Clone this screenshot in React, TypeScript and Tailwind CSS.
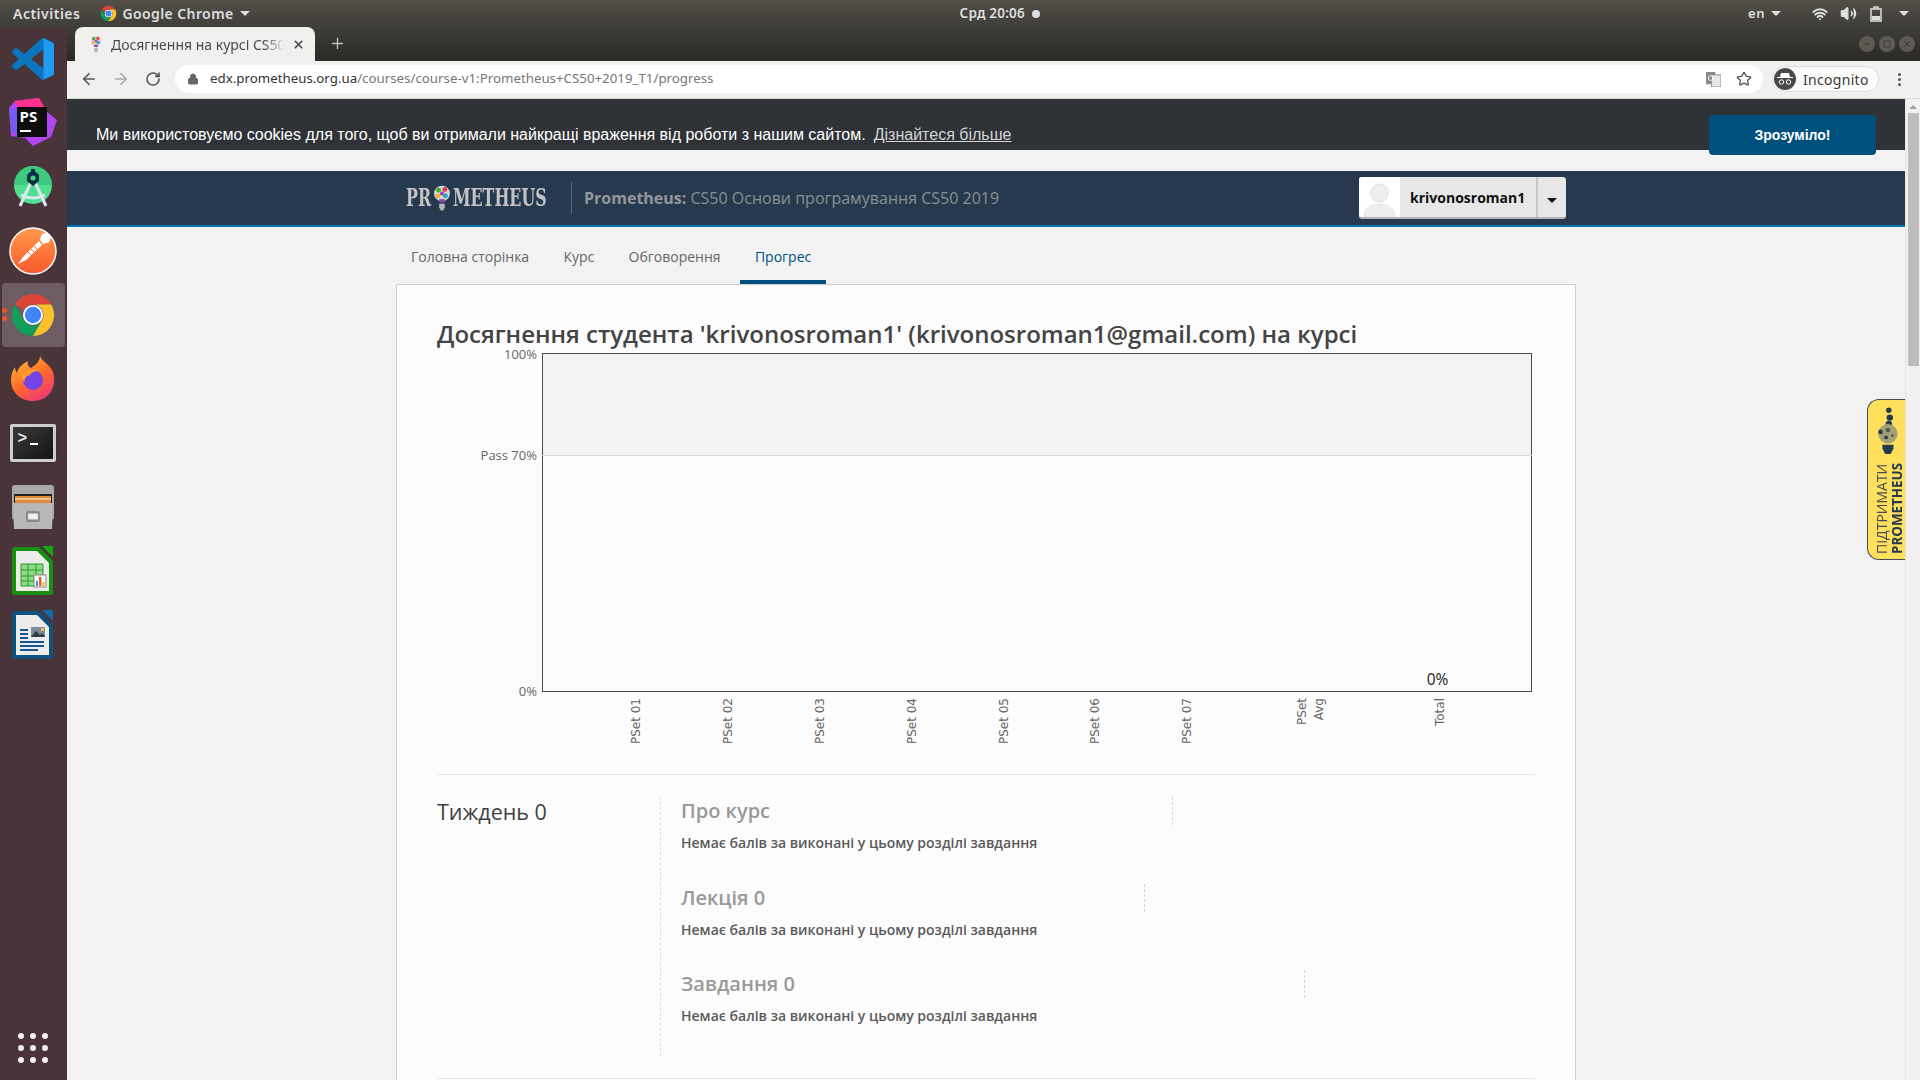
import { ArrowLeft, ArrowRight, Lock, Minus, Plus, RotateCw, Square, Star, Volume2, Wifi, X } from "lucide-react";

const pageSections = [
  { title: "Про курс", width: "w-[492px]" },
  { title: "Лекція 0", width: "w-[464px]" },
  { title: "Завдання 0", width: "w-[624px]" },
];

const navItems = ["Головна сторінка", "Курс", "Обговорення", "Прогрес"];

const xTicks = [
  { x: 199, label: "PSet 01" },
  { x: 291, label: "PSet 02" },
  { x: 383, label: "PSet 03" },
  { x: 475, label: "PSet 04" },
  { x: 567, label: "PSet 05" },
  { x: 658, label: "PSet 06" },
  { x: 750, label: "PSet 07" },
];

function Caret({ className }: { className: string }) {
  return <span className={`inline-block h-0 w-0 border-x-[5px] border-t-[5px] border-x-transparent ${className}`} />;
}

function ChromeIcon({ size }: { size: number }) {
  return (
    <svg width={size} height={size} viewBox="0 0 48 48">
      <path fill="#db4437" d="M5 13A22 22 0 0 1 43 13H24a11 11 0 0 0-9.5 5.5z" />
      <path fill="#0f9d58" d="M5 13A22 22 0 0 0 24 46l9.5-16.5a11 11 0 0 1-19 0z" />
      <path fill="#fbc02d" d="M43 13H24a11 11 0 0 1 9.5 16.5L24 46A22 22 0 0 0 43 13z" />
      <circle cx="24" cy="24" r="10.5" fill="#fff" />
      <circle cx="24" cy="24" r="8.5" fill="#4285f4" />
    </svg>
  );
}

function Bulb({ className }: { className: string }) {
  return (
    <svg className={className} viewBox="0 0 16 24">
      <circle cx="8" cy="8" r="7" fill="#d8d8d8" />
      <circle cx="5" cy="5" r="2.2" fill="#43b02a" />
      <circle cx="10.5" cy="4.5" r="2.2" fill="#e23c4b" />
      <circle cx="4.5" cy="10" r="2" fill="#f0b429" />
      <circle cx="11" cy="10" r="2.2" fill="#2aa6c9" />
      <circle cx="8" cy="8" r="1.8" fill="#a33fb0" />
      <path fill="#8d4aa8" d="M5.5 13h5v3h-5z" />
      <path fill="#b5b5b5" d="M5.5 17h5v3.5L9 23H7l-1.500-2.500z" />
    </svg>
  );
}

function DockIcons() {
  return [
    <svg key="code" width="42" height="42" viewBox="0 0 100 100">
      <path fill="#0b75bd" fillRule="evenodd" d="M70.9 99.3c1.6.6 3.4.6 5-.2l20.6-9.9c2.100-1 3.500-3.200 3.500-5.600V16.400c0-2.400-1.400-4.600-3.500-5.600L75.900.9c-2.100-1-4.600-.8-6.400.6-.3.2-.5.400-.7.600L29.400 38 12.200 25c-1.600-1.200-3.800-1.100-5.300.2l-5.500 5c-1.800 1.700-1.800 4.500 0 6.200L16.200 50 1.400 63.600c-1.800 1.700-1.800 4.500 0 6.200l5.500 5c1.500 1.300 3.700 1.400 5.300.2l17.200-13 39.400 35.900c.6.600 1.300 1.100 2.100 1.400zM75 27.300 45.100 50 75 72.700z" />
      <path fill="#1f9cf0" d="M75 27.300V.2c.3.100.6.300.9.400l20.600 10.200c2.100 1 3.500 3.200 3.500 5.600v67.200c0 2.400-1.400 4.600-3.500 5.600L75.900 99.100c-.3.200-.6.300-.9.400V72.700z" />
    </svg>,
    <svg key="ps" width="50" height="50" viewBox="0 0 50 50">
      <path fill="#b345f1" d="M1 10 7 3l24-3 7 13 11 9-6 17-18 9-8-8-14-2z" />
      <path fill="#ff318c" d="M6 3 31 0l6 10-24 3z" />
      <path fill="#765af8" d="M1 11 13 10 11 36 4 35z" />
      <rect x="9" y="9" width="30" height="30" fill="#0d0d0d" />
      <text x="11.500" y="24" fontFamily="Open Sans, sans-serif" fontWeight="700" fontSize="15" fill="#fff">PS</text>
      <rect x="12" y="32" width="11" height="2" fill="#fff" />
    </svg>,
    <svg key="android" width="50" height="50" viewBox="0 0 50 50">
      <circle cx="25" cy="23" r="19" fill="#4ee08f" />
      <path fill="#2fbb77" d="M6 23a19 19 0 0 1 38 0z" opacity=".6" />
      <path stroke="#dce7f0" strokeWidth="3" fill="none" d="M25 16 12 44M25 16l13 28M13 33c8 4 16 4 24 0" />
      <path fill="#073042" d="M23 7h4v3h1l3 3v6l-6 5-6-5v-6l3-3h1z" />
      <circle cx="25" cy="16" r="2.500" fill="#3ddc84" />
    </svg>,
    <svg key="postman" width="50" height="50" viewBox="0 0 50 50">
      <defs>
        <linearGradient id="pm" x1="0" x2="0" y1="0" y2="1">
          <stop offset="0" stopColor="#ff9a4d" />
          <stop offset="1" stopColor="#f9592a" />
        </linearGradient>
      </defs>
      <circle cx="25" cy="25" r="23" fill="url(#pm)" stroke="#fff" strokeWidth="1.500" />
      <path fill="#fff" d="M10 38l8-4L34 19l-3-4L15 31z" />
      <path fill="#fff" d="M33 10a5 5 0 1 1 5 7l-3 1-3-4z" />
      <path stroke="#f9692f" strokeWidth="1" d="M20 26l4 4M23 23l4 4M26 20l4 4" />
    </svg>,
    <ChromeIcon key="chrome" size={46} />,
    <svg key="firefox" width="48" height="48" viewBox="0 0 48 48">
      <defs>
        <linearGradient id="ff" x1="0.200" x2="0.800" y1="0" y2="1">
          <stop offset="0" stopColor="#ffbd2e" />
          <stop offset="0.500" stopColor="#ff6a2b" />
          <stop offset="1" stopColor="#f0327f" />
        </linearGradient>
      </defs>
      <path fill="url(#ff)" d="M31 1c2 6 10 8 13 16 4 12-2 29-20 29C10 46 2 36 2 25c0-6 2-10 4-13 0 3 1 5 2 6 1-5 5-9 11-12-1 4 1 6 3 7 5-3 9-7 9-12z" />
      <circle cx="24" cy="25" r="10" fill="#7542e5" />
      <path fill="#ff9a2e" d="M12 20c3-5 12-7 18-4-5 0-8 2-9 4-4 1-6 3-5 7-3-2-4-4-4-7z" />
    </svg>,
    <div key="term" className="flex h-[38px] w-[46px] flex-col rounded-[2px] border-[3px] border-[#cdcdcd] bg-gradient-to-br from-[#3a3a3a] to-[#151515] p-[2px] shadow-sm">
      <span className="flex items-center gap-[3px] pl-[3px] pt-[2px] font-['Liberation_Mono',monospace] text-[16px] leading-[16px] font-bold text-[#e8e8e8]">
        <span>{">"}</span>
        <span className="mt-[10px] h-[2px] w-[8px] bg-white" />
      </span>
    </div>,
    <svg key="files" width="44" height="46" viewBox="0 0 44 46">
      <rect x="1" y="1" width="42" height="35" rx="3" fill="#a8a8a8" />
      <rect x="3" y="10" width="38" height="9" fill="#222" />
      <rect x="4" y="12" width="36" height="8" fill="#e08a3c" />
      <rect x="4" y="14" width="36" height="2" fill="#f3c08a" />
      <path fill="#b8b8b8" d="M2 19h40l-1 26H3z" />
      <rect x="15" y="27" width="14" height="11" rx="2" fill="#8b8b8b" />
      <rect x="17" y="29.500" width="10" height="6" rx="1" fill="#efefef" />
    </svg>,
    <svg key="calc" width="42" height="50" viewBox="0 0 42 50">
      <path fill="#16900f" d="M3 1h24l14 14v31a3 3 0 0 1-3 3H3a3 3 0 0 1-3-3V4a3 3 0 0 1 3-3z" />
      <path fill="#ececec" d="M4 5h21l12 12v28H4z" />
      <path fill="#16a80f" d="M30 0h11v11z" />
      <path fill="#8ed98a" stroke="#2c9d25" d="M9 18h22v22H9z" />
      <path stroke="#2c9d25" d="M9 24h22M9 30h22M9 35h22M16 18v22M24 18v22" />
      <rect x="22" y="29" width="12" height="12" fill="#fff" stroke="#888" />
      <rect x="24" y="35" width="2" height="5" fill="#3a8fd8" />
      <rect x="27" y="31" width="2.500" height="9" fill="#e8602c" />
      <rect x="30.500" y="36" width="2" height="4" fill="#f0b429" />
    </svg>,
    <svg key="writer" width="42" height="50" viewBox="0 0 42 50">
      <path fill="#114f7f" d="M3 1h24l14 14v31a3 3 0 0 1-3 3H3a3 3 0 0 1-3-3V4a3 3 0 0 1 3-3z" />
      <path fill="#ececec" d="M4 5h21l12 12v28H4z" />
      <path fill="#1169ab" d="M30 0h11v11z" />
      <path stroke="#14578f" strokeWidth="2" d="M8 20h8M8 24h8M8 28h8M8 32h24M8 36h24M8 40h18" />
      <rect x="19" y="17" width="14" height="10" fill="#7b8b9a" />
      <path fill="#2f3b45" d="M19 27l5-6 4 4 2-2 3 4z" />
      <rect x="29" y="18" width="3" height="3" fill="#f0c04a" />
    </svg>,
  ];
}

function Sidebar() {
  const icons = DockIcons();
  return (
    <aside className="flex w-[67px] shrink-0 flex-col bg-[#49343a]">
      {icons.map((icon, i) => (
        <div key={i} className="relative flex h-[64px] items-center justify-center pr-[2px]">
          {i === 4 && (
            <>
              <div className="absolute inset-x-[2px] inset-y-0 rounded bg-white/20" />
              <div className="absolute left-[2px] top-[25px] flex flex-col gap-[3px]">
                <span className="h-[5px] w-[5px] rounded-full bg-[#e95420]" />
                <span className="h-[5px] w-[5px] rounded-full bg-[#e95420]" />
              </div>
            </>
          )}
          <div className="relative">{icon}</div>
        </div>
      ))}
      <div className="mt-auto mb-[17px] ml-[18px] grid w-fit grid-cols-3 gap-[6px]">
        {Array.from({ length: 9 }).map((_, i) => (
          <span key={i} className="h-[6px] w-[6px] rounded-full bg-[#f2efef]" />
        ))}
      </div>
    </aside>
  );
}

function TopBar() {
  return (
    <div className="flex h-[27px] shrink-0 items-center pl-[13px] pr-[11px] font-['Noto_Sans',sans-serif] text-[14px] font-semibold text-[#dedede]">
      <span className="tracking-[0.5px]">Activities</span>
      <span className="ml-[20px]">
        <ChromeIcon size={17} />
      </span>
      <span className="ml-[5px] tracking-[0.4px]">Google Chrome</span>
      <Caret className="ml-[6px] border-t-[#dedede]" />
      <span className="ml-[710px] text-[13.500px] tracking-[0.2px]">Срд 20:06</span>
      <span className="ml-[7px] h-[8px] w-[8px] rounded-full bg-[#dedede]" />
      <span className="ml-auto text-[13px] tracking-[0.5px]">en</span>
      <Caret className="ml-[6px] border-t-[#dedede]" />
      <Wifi size={16} strokeWidth={3} className="ml-[31px]" />
      <Volume2 size={17} fill="#dedede" className="ml-[12px]" />
      <svg width="12" height="16" viewBox="0 0 12 16" className="ml-[13px]">
        <path fill="none" stroke="#dedede" strokeWidth="1.500" d="M1 3h10v12H1zM4 3V1h4v2" />
        <rect x="2" y="10" width="8" height="4" fill="#dedede" />
      </svg>
      <Caret className="ml-[17px] border-t-[#dedede]" />
    </div>
  );
}

function ChromeBars() {
  return (
    <>
      <div className="flex h-[34px] shrink-0 items-end pl-[8px] pr-[5px] font-['Noto_Sans',sans-serif]">
        <div className="flex h-[34px] w-[240px] items-center rounded-t-[8px] bg-[#f1f0ee] pl-[15px] pr-[10px]">
          <Bulb className="h-[18px] w-[12px] shrink-0" />
          <span className="ml-[9px] w-[174px] overflow-hidden text-[14px] whitespace-nowrap text-[#4a4a4a] [mask-image:linear-gradient(to_right,black_88%,transparent)]">
            Досягнення на курсі CS50
          </span>
          <X size={13} strokeWidth={3} className="ml-auto text-[#444]" />
        </div>
        <Plus size={17} className="mb-[9px] ml-[14px] text-[#bdbdbd]" />
        <div className="mb-[9px] ml-auto flex gap-[4px]">
          <span className="flex h-[16px] w-[16px] items-center justify-center rounded-full bg-[#5d5b53]">
            <Minus size={10} className="text-[#33322e]" />
          </span>
          <span className="flex h-[16px] w-[16px] items-center justify-center rounded-full bg-[#5d5b53]">
            <Square size={8} className="text-[#33322e]" />
          </span>
          <span className="flex h-[16px] w-[16px] items-center justify-center rounded-full bg-[#5d5b53]">
            <X size={10} className="text-[#33322e]" />
          </span>
        </div>
      </div>
      <div className="flex h-[38px] shrink-0 items-center border-b border-[#d8d8d8] bg-[#f1f0ee] pb-[1px] pl-[13px] pr-[12px] font-['Noto_Sans',sans-serif]">
        <ArrowLeft size={18} strokeWidth={2.200} className="text-[#555]" />
        <ArrowRight size={18} strokeWidth={2.200} className="ml-[14px] text-[#aaa]" />
        <RotateCw size={16} strokeWidth={2.400} className="ml-[15px] text-[#555]" />
        <div className="ml-[14px] flex h-[28px] w-[1588px] items-center rounded-full bg-white pl-[12px] pr-[11px]">
          <Lock size={12} fill="#666" className="text-[#666]" />
          <span className="ml-[11px] text-[13.300px] text-[#333]">
            edx.prometheus.org.ua<span className="text-[#777]">/courses/course-v1:Prometheus+CS50+2019_T1/progress</span>
          </span>
          <svg width="15" height="15" viewBox="0 0 16 16" className="ml-auto">
            <rect x="0" y="0" width="10" height="13" fill="#8a8a8a" />
            <rect x="6" y="3" width="10" height="13" fill="#e8e8e8" stroke="#8a8a8a" />
            <circle cx="5" cy="6.500" r="2.500" fill="none" stroke="#fff" />
          </svg>
          <Star size={16} strokeWidth={2} className="ml-[15px] text-[#555]" />
        </div>
        <div className="ml-[9px] flex h-[26px] w-[107px] items-center rounded-full border border-[#dedede] bg-[#fbfbfa] pl-[1px]">
          <span className="flex h-[22px] w-[22px] items-center justify-center rounded-full bg-[#4a4a4a]">
            <svg width="16" height="12" viewBox="0 0 16 12">
              <path fill="#fff" d="M4 0h8l1 4h3v1H0V4h3z" />
              <circle cx="4.500" cy="9" r="2.200" fill="none" stroke="#fff" />
              <circle cx="11.500" cy="9" r="2.200" fill="none" stroke="#fff" />
            </svg>
          </span>
          <span className="ml-[7px] text-[14px] tracking-[0.3px] text-[#3c3c3c]">Incognito</span>
        </div>
        <div className="ml-auto mr-[7px] flex flex-col gap-[2px]">
          <span className="h-[3px] w-[3px] rounded-full bg-[#555]" />
          <span className="h-[3px] w-[3px] rounded-full bg-[#555]" />
          <span className="h-[3px] w-[3px] rounded-full bg-[#555]" />
        </div>
      </div>
    </>
  );
}

function Chart() {
  return (
    <svg className="block h-[425px] w-[1098px] overflow-visible" viewBox="0 0 1098 425">
      <rect x="105.500" y="4.500" width="989" height="102" fill="#f3f3f3" />
      <rect x="105.500" y="4.500" width="989" height="338" fill="none" stroke="#4a4a4a" />
      <line x1="105" x2="1095" y1="106.500" y2="106.500" stroke="#d8d8d8" />
      <g fontFamily="Open Sans, sans-serif" fontSize="13" fill="#666" textAnchor="end">
        <text x="100" y="10">100%</text>
        <text x="100" y="111">Pass 70%</text>
        <text x="100" y="347">0%</text>
      </g>
      <g fontFamily="DejaVu Sans, sans-serif" fontSize="12" fill="#666" textAnchor="end">
        {xTicks.map((t) => (
          <text key={t.label} transform={`translate(${t.x + 4} 349) rotate(-90)`}>
            {t.label}
          </text>
        ))}
        <text transform="translate(869 349) rotate(-90)">PSet</text>
        <text transform="translate(886 349) rotate(-90)">Avg</text>
        <text transform="translate(1007 349) rotate(-90)">Total</text>
      </g>
      <text x="1000.500" y="336" textAnchor="middle" fontFamily="Open Sans, sans-serif" fontSize="15.500" fill="#222">
        0%
      </text>
    </svg>
  );
}

function PageContent() {
  return (
    <div className="relative min-w-0 flex-1 overflow-hidden bg-[#f2f2f2] font-['Open_Sans',sans-serif]">
      <div className="flex h-[51px] items-start justify-between bg-[#2f3337] pl-[29px] pr-[29px] pt-[16px] font-['Liberation_Sans',sans-serif]">
        <p className="flex h-[40px] items-center gap-[8px] text-[16px] text-white">
          Ми використовуємо cookies для того, щоб ви отримали найкращі враження від роботи з нашим сайтом.
          <a className="text-[#d4d4d4] underline">Дізнайтеся більше</a>
        </p>
        <button className="relative z-10 h-[40px] w-[167px] rounded bg-[#00507e] text-[14px] font-bold text-white">
          Зрозуміло!
        </button>
      </div>

      <header className="mt-[21px] h-[56px] border-b-2 border-[#0075b4] bg-[#26394f]">
        <div className="mx-auto flex h-[54px] w-[1160px] items-center">
          <div className="flex w-[147px] items-center font-['DejaVu_Serif','Liberation_Serif',serif] text-[24px] font-bold whitespace-nowrap text-[#c4c4c4]">
            <span className="w-[27px] origin-left scale-x-[.66]">PR</span>
            <Bulb className="h-[30px] w-[18px] shrink-0" />
            <span className="ml-[2px] w-[100px] origin-left scale-x-[.66]">METHEUS</span>
          </div>
          <span className="ml-[18px] h-[32px] w-px bg-[#55677b]" />
          <p className="ml-[12px] text-[16px] text-[#8a8f94]">
            <strong className="font-bold text-[#94979a]">Prometheus:</strong> CS50 Основи програмування CS50 2019
          </p>
          <div className="ml-auto flex h-[42px] w-[207px] rounded-[3px] border-b-2 border-[#b5b5b5] bg-[#e7e7e7]">
            <span className="flex h-[40px] w-[41px] items-end justify-center overflow-hidden rounded-l-[3px] bg-white">
              <svg width="33" height="36" viewBox="0 0 33 36">
                <circle cx="16.500" cy="12" r="9" fill="#eee" stroke="#e4e4e4" />
                <path fill="#eee" stroke="#e4e4e4" d="M1 36c0-9 7-13 15.500-13S32 27 32 36z" />
              </svg>
            </span>
            <span className="ml-[10px] self-center text-[14px] font-bold text-[#111]">krivonosroman1</span>
            <span className="ml-auto flex w-[30px] items-center justify-center border-l-2 border-[#c8c8c8]">
              <Caret className="mt-[6px] border-t-[#111]" />
            </span>
          </div>
        </div>
      </header>

      <nav className="mx-auto flex h-[57px] w-[1180px] items-end gap-[4.300px] text-[14px]">
        {navItems.map((item, i) => (
          <a
            key={item}
            className={
              i === 3
                ? "flex h-[57px] items-center border-b-[4px] border-[#00507e] px-[15px] pt-[5px] text-[#00507e]"
                : "flex h-[57px] items-center border-b-[4px] border-transparent px-[15px] pt-[5px] text-[#666]"
            }
          >
            {item}
          </a>
        ))}
      </nav>

      <main className="mx-auto h-[900px] w-[1180px] border border-[#cfcfcf] bg-[#fcfcfc] px-[40px] pt-[34px]">
        <h1 className="text-[24px] leading-[30px] font-semibold whitespace-nowrap text-[#444]">
          Досягнення студента 'krivonosroman1' (krivonosroman1@gmail.com) на курсі
        </h1>
        <Chart />
        <section className="flex border-t border-b border-[#e4e4e4] pt-[22px] pb-[22px]">
          <h2 className="w-[223px] text-[21.500px] leading-[30px] text-[#414141]">Тиждень 0</h2>
          <div className="h-[259px] flex-1 border-l border-dashed border-[#dedede] pl-[20px]">
            {pageSections.map((s) => (
              <div key={s.title} className="h-[86.500px]">
                <h3 className={`h-[28px] border-r border-dashed border-[#d4d4d4] text-[20px] leading-[28px] font-semibold text-[#999] ${s.width}`}>
                  {s.title}
                </h3>
                <p className="mt-[8px] text-[14px] leading-[20px] font-semibold text-[#5a5a5a]">
                  Немає балів за виконані у цьому розділі завдання
                </p>
              </div>
            ))}
          </div>
        </section>
      </main>

      <aside className="absolute right-0 top-[300px] flex h-[161px] w-[38px] flex-col items-center overflow-hidden rounded-l-[12px] border border-r-0 border-[#444b55] bg-[#ffe05c]">
        <svg width="26" height="48" viewBox="0 0 26 52" className="mt-[7px] shrink-0">
          <circle cx="15" cy="3.500" r="3" fill="#26394f" />
          <circle cx="16" cy="11.500" r="3.500" fill="#26394f" />
          <circle cx="15" cy="18.500" r="3.500" fill="#26394f" />
          <circle cx="14" cy="29" r="10.500" fill="#a39f78" />
          <circle cx="6" cy="27" r="2.500" fill="#26394f" />
          <circle cx="12" cy="33" r="2" fill="#26394f" />
          <circle cx="14" cy="25" r="2.500" fill="#54594f" />
          <circle cx="19" cy="31" r="1.500" fill="#54594f" />
          <path fill="#26394f" d="M8 41h12v4l-3 6h-6l-3-6z" />
        </svg>
        <div className="flex flex-1 rotate-180 flex-col gap-[1px] pt-[5px] pr-[6px] leading-[15px] [writing-mode:vertical-rl] whitespace-nowrap">
          <span className="text-[14px] text-[#444b55]">ПІДТРИМАТИ</span>
          <strong className="text-[13.400px] font-bold text-[#26394f]">PROMETHEUS</strong>
        </div>
      </aside>
    </div>
  );
}

function Scrollbar() {
  return (
    <div className="flex w-[15px] shrink-0 flex-col items-center border-l border-[#e4e4e4] bg-[#f1f1f1]">
      <span className="mt-[6px] h-0 w-0 border-x-[4px] border-b-[4px] border-x-transparent border-b-[#a3a3a3]" />
      <span className="mt-[4px] h-[253px] w-[11px] bg-[#bdbdbd]" />
    </div>
  );
}

export default function App() {
  return (
    <div className="flex h-screen flex-col overflow-hidden bg-gradient-to-b from-[#524f48] to-[#2a2926] bg-[length:100%_61px] bg-no-repeat">
      <TopBar />
      <div className="flex min-h-0 flex-1">
        <Sidebar />
        <div className="flex min-w-0 flex-1 flex-col">
          <ChromeBars />
          <div className="flex min-h-0 flex-1">
            <PageContent />
            <Scrollbar />
          </div>
        </div>
      </div>
    </div>
  );
}
